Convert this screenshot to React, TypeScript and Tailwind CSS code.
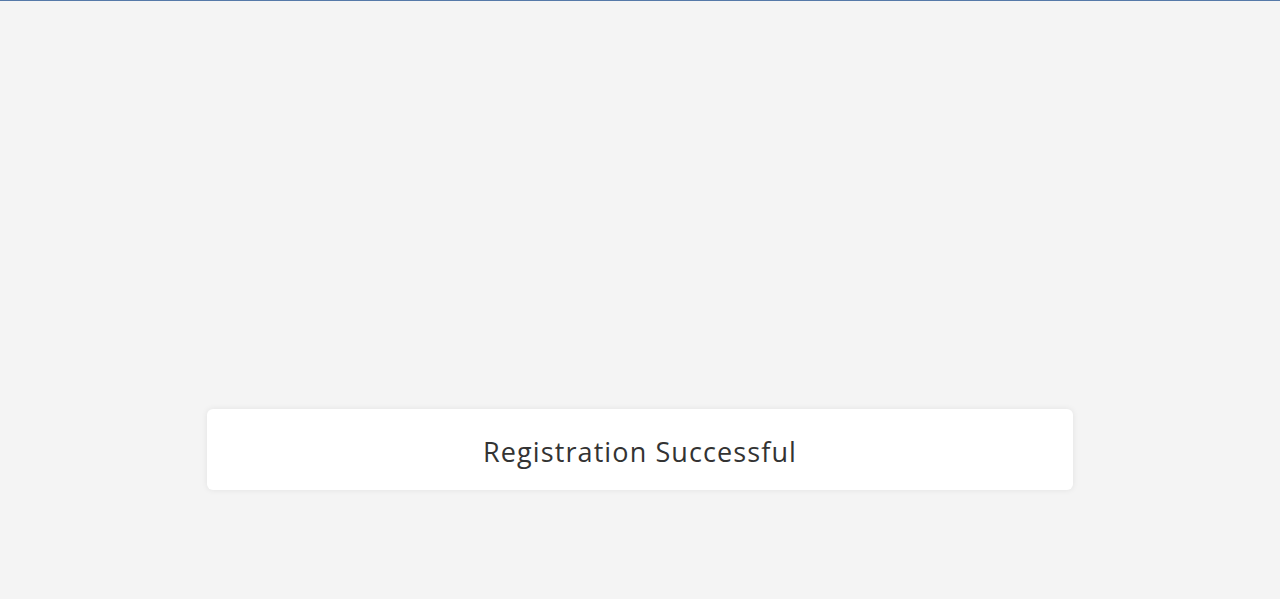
export default function App() {
  return (
    <div className="min-h-[599px] bg-[#f4f4f4] border-t border-[#5679a8] font-['Open_Sans',sans-serif]">
      <div className="pt-[408px] flex justify-center">
        <div className="w-[866px] h-[81px] bg-white rounded-md shadow-[0_0_6px_rgba(0,0,0,0.08)] flex items-center justify-center pt-[6px]">
          <h1 className="text-[27px] font-medium text-[#333333] tracking-[1.1px]">Registration Successful</h1>
        </div>
      </div>
    </div>
  );
}
